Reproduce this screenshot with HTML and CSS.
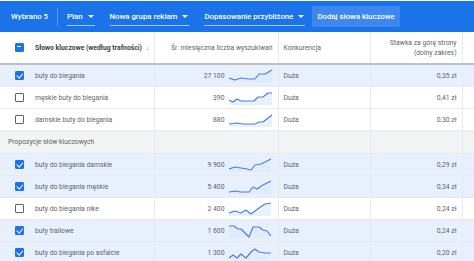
FILE: index.html
```html
<!DOCTYPE html>
<html lang="pl">
<head>
  <meta charset="UTF-8">
  <meta name="viewport" content="width=device-width, initial-scale=1.0">
  <title>Planer słów kluczowych</title>
  <link rel="stylesheet" href="styles.css">
</head>
<body>
  <div class="toolbar">
    <span class="selected">Wybrano 5</span>
    <span class="divider"></span>
    <span class="dropdown">Plan <span class="caret"></span></span>
    <span class="dropdown">Nowa grupa reklam <span class="caret"></span></span>
    <span class="dropdown">Dopasowanie przybliżone <span class="caret"></span></span>
    <span class="add-btn">Dodaj słowa kluczowe</span>
  </div>

  <table class="kw-table">
    <colgroup>
      <col class="c-kw">
      <col class="c-vol">
      <col class="c-comp">
      <col class="c-bid">
      <col class="c-end">
    </colgroup>
    <thead>
      <tr>
        <th class="kw"><span class="box box-mixed"></span><span class="kw-title">Słowo kluczowe (według trafności) <span class="arrow">↓</span></span></th>
        <th class="num">Śr. miesięczna liczba wyszukiwań</th>
        <th>Konkurencja</th>
        <th class="num">Stawka za górę strony<br>(dolny zakres)</th>
        <th></th>
      </tr>
    </thead>
    <tbody>
      <tr class="on">
        <td class="kw"><span class="box box-on"></span>buty do biegania</td>
        <td class="num"><span class="vol">27 100</span><svg class="spark" viewBox="0 0 44 14"><path class="area" d="M0 9 L6 11 L12 9 L19 10 L26 10 L30 5 L36 5 L43 1 L43 14 L0 14 Z"/><polyline points="0,9 6,11 12,9 19,10 26,10 30,5 36,5 43,1"/></svg></td>
        <td>Duża</td>
        <td class="num">0,35 zł</td>
        <td></td>
      </tr>
      <tr>
        <td class="kw"><span class="box"></span>męskie buty do biegania</td>
        <td class="num"><span class="vol">390</span><svg class="spark" viewBox="0 0 44 14"><path class="area" d="M0 9 L4 11 L8 8 L12 10 L18 10 L25 10 L29 6 L34 6 L39 2 L43 2 L43 14 L0 14 Z"/><polyline points="0,9 4,11 8,8 12,10 18,10 25,10 29,6 34,6 39,2 43,2"/></svg></td>
        <td>Duża</td>
        <td class="num">0,41 zł</td>
        <td></td>
      </tr>
      <tr>
        <td class="kw"><span class="box"></span>damskie buty do biegania</td>
        <td class="num"><span class="vol">880</span><svg class="spark" viewBox="0 0 44 14"><path class="area" d="M0 11 L8 10 L14 11 L20 11 L26 11 L30 9 L34 9 L43 2 L43 14 L0 14 Z"/><polyline points="0,11 8,10 14,11 20,11 26,11 30,9 34,9 43,2"/></svg></td>
        <td>Duża</td>
        <td class="num">0,30 zł</td>
        <td></td>
      </tr>
      <tr class="section">
        <td class="kw label">Propozycje słów kluczowych</td>
        <td></td>
        <td></td>
        <td></td>
        <td></td>
      </tr>
      <tr class="on">
        <td class="kw"><span class="box box-on"></span>buty do biegania damskie</td>
        <td class="num"><span class="vol">9 900</span><svg class="spark" viewBox="0 0 44 14"><path class="area" d="M0 11 L6 9 L12 10 L18 11 L22 12 L26 7 L32 6 L42 1 L42 14 L0 14 Z"/><polyline points="0,11 6,9 12,10 18,11 22,12 26,7 32,6 42,1"/></svg></td>
        <td>Duża</td>
        <td class="num">0,29 zł</td>
        <td></td>
      </tr>
      <tr class="on">
        <td class="kw"><span class="box box-on"></span>buty do biegania męskie</td>
        <td class="num"><span class="vol">5 400</span><svg class="spark" viewBox="0 0 44 14"><path class="area" d="M0 12 L6 11 L12 12 L20 12 L24 7 L28 9 L34 5 L42 1 L42 14 L0 14 Z"/><polyline points="0,12 6,11 12,12 20,12 24,7 28,9 34,5 42,1"/></svg></td>
        <td>Duża</td>
        <td class="num">0,34 zł</td>
        <td></td>
      </tr>
      <tr>
        <td class="kw"><span class="box"></span>buty do biegania nike</td>
        <td class="num"><span class="vol">2 400</span><svg class="spark" viewBox="0 0 44 14"><path class="area" d="M0 11 L6 9 L12 11 L17 8 L22 12 L30 6 L36 2 L42 1 L42 14 L0 14 Z"/><polyline points="0,11 6,9 12,11 17,8 22,12 30,6 36,2 42,1"/></svg></td>
        <td>Duża</td>
        <td class="num">0,24 zł</td>
        <td></td>
      </tr>
      <tr class="on">
        <td class="kw"><span class="box box-on"></span>buty trailowe</td>
        <td class="num"><span class="vol">1 600</span><svg class="spark" viewBox="0 0 44 14"><path class="area" d="M0 2 L5 2 L9 5 L12 5 L16 9 L20 13 L24 3 L30 3 L34 6 L38 7 L42 12 L42 14 L0 14 Z"/><polyline points="0,2 5,2 9,5 12,5 16,9 20,13 24,3 30,3 34,6 38,7 42,12"/></svg></td>
        <td>Duża</td>
        <td class="num">0,24 zł</td>
        <td></td>
      </tr>
      <tr class="on">
        <td class="kw"><span class="box box-on"></span>buty do biegania po asfalcie</td>
        <td class="num"><span class="vol">1 300</span><svg class="spark" viewBox="0 0 44 14"><path class="area" d="M0 12 L4 9 L8 12 L12 8 L17 12 L22 6 L26 3 L30 6 L36 7 L42 7 L42 14 L0 14 Z"/><polyline points="0,12 4,9 8,12 12,8 17,12 22,6 26,3 30,6 36,7 42,7"/></svg></td>
        <td>Duża</td>
        <td class="num">0,20 zł</td>
        <td></td>
      </tr>
    </tbody>
  </table>
</body>
</html>
```

FILE: styles.css
```css
body {
  margin: 0;
  padding: 0;
  font-family: Roboto, "Liberation Sans", Arial, sans-serif;
  font-size: 6.8px;
  color: #5f6368;
  background: #fff;
}
.toolbar {
  display: flex;
  align-items: center;
  height: 31px;
  margin-top: 1px;
  padding: 0 11px;
  background-color: #1a73e8;
  color: #fff;
  font-size: 7.8px;
  font-weight: 500;
}
.selected {
  margin-right: 9px;
}
.divider {
  width: 1px;
  height: 18px;
  background: #5a9bf0;
  margin-right: 9px;
}
.dropdown {
  display: flex;
  align-items: center;
  height: 16px;
  padding-top: 1px;
  padding-right: 1px;
  border-bottom: 1px solid #a9c8f6;
  margin-right: 15px;
}
.caret {
  display: inline-block;
  margin-left: 5px;
  border-left: 3px solid transparent;
  border-right: 3px solid transparent;
  border-top: 3px solid #fff;
}
.add-btn {
  margin-left: -8px;
  padding: 6px 5px;
  background: #3d87ee;
  border-radius: 1px;
}
.kw-table {
  width: 474px;
  border-collapse: collapse;
  table-layout: fixed;
}
.c-kw { width: 154px; }
.c-vol { width: 124px; }
.c-comp { width: 92px; }
.c-bid { width: 92px; }
.c-end { width: 12px; }
.kw-table th,
.kw-table td {
  border-right: 1px solid #e8eaed;
  padding: 0 5px;
  text-align: left;
  white-space: nowrap;
  overflow: hidden;
}
.kw-table th {
  height: 31px;
  font-weight: 400;
  line-height: 10px;
  border-bottom: 2px solid #bdc1c6;
}
.kw-table td {
  height: 21px;
  border-bottom: 1px solid #e8eaed;
}
.kw-table .num {
  text-align: right;
}
.kw-table .kw {
  padding-left: 15px;
}
.kw-title {
  font-weight: 700;
  color: #3c4043;
}
.arrow {
  font-weight: 400;
  color: #80868b;
  margin-left: 2px;
}
tr.on td {
  background: #e8f0fe;
}
tr.section td {
  background: #f1f3f4;
  height: 22px;
}
.kw-table .label {
  padding-left: 8px;
}
.box {
  display: inline-block;
  box-sizing: border-box;
  width: 9px;
  height: 9px;
  border: 1.5px solid #5f6368;
  border-radius: 1px;
  margin-right: 11px;
  vertical-align: -2px;
  position: relative;
}
.box-on,
.box-mixed {
  background: #1a73e8;
  border-color: #1a73e8;
}
.box-on::after {
  content: '';
  position: absolute;
  left: 1.5px;
  top: 0;
  width: 2.5px;
  height: 4.5px;
  border-right: 1.3px solid #fff;
  border-bottom: 1.3px solid #fff;
  transform: rotate(40deg);
}
.box-mixed::after {
  content: '';
  position: absolute;
  left: 1px;
  top: 2.2px;
  width: 4px;
  height: 1.2px;
  background: #fff;
}
.vol {
  vertical-align: middle;
}
.spark {
  width: 44px;
  height: 14px;
  margin-left: 4px;
  vertical-align: middle;
}
.spark polyline {
  fill: none;
  stroke: #4a7fdc;
  stroke-width: 1.2;
  stroke-linejoin: round;
}
.spark .area {
  fill: #dbe7fb;
  opacity: 0.6;
}
```
